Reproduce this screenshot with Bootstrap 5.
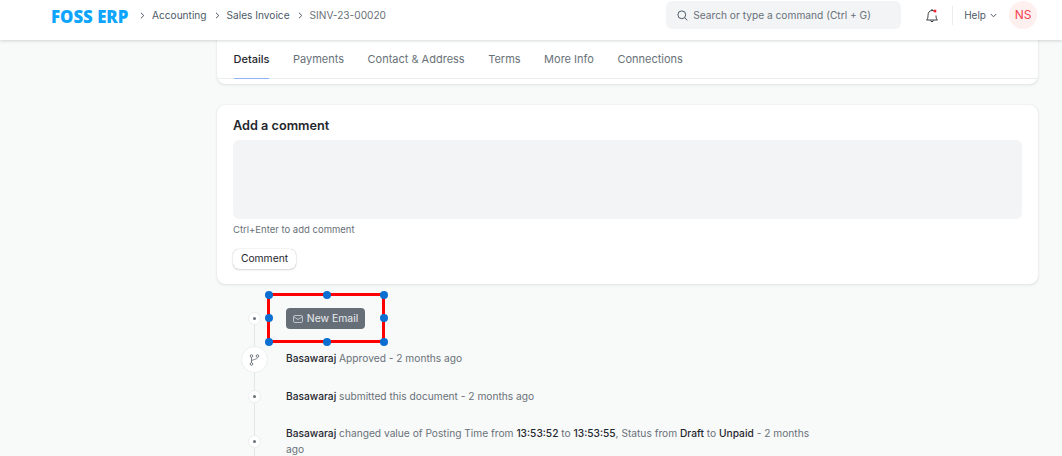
<!DOCTYPE html>
<html lang="en">
<head>
    <meta charset="UTF-8">
    <title>SINV-23-00020</title>
    <link href="https://cdn.jsdelivr.net/npm/bootstrap@5.3.3/dist/css/bootstrap.min.css" rel="stylesheet">
    <style>
        html, body { height: 456px; overflow: hidden; }
        body { background: #f8f9f9; font-family: Inter, "Liberation Sans", sans-serif; color: #1f272e; font-size: 11px; }

        .top-bar { height: 40px; background: #fff; box-shadow: 0 1px 3px rgba(25, 39, 52, .18); padding: 0 25px 10px 51px; position: relative; z-index: 2; }
        .brand-name { font-family: "Open Sans", sans-serif; font-weight: 800; font-size: 16.8px; color: #0ea5ff; width: 81px; margin-top: 3px; white-space: nowrap; }
        .crumb { color: #4c5a67; font-size: 10.15px; white-space: nowrap; margin-top: 1px; }
        .crumb-last { color: #687178; }
        .crumb-sep { width: 5px; height: 7px; margin: 0 7px 0 8px; }
        .search-box { width: 235px; height: 28px; margin-left: auto; background: #f3f4f6; border-radius: 6px; color: #687178; padding-left: 11px; font-size: 10.2px; white-space: nowrap; }
        .search-box svg { margin-right: 5px; }
        .search-box span { margin-top: 1px; }
        .bell-icon { margin-left: 25px; }
        .nav-divider { width: 1px; height: 19px; background: #ebeef0; margin: 0 11px 0 14px; }
        .help-link { color: #4c5a67; font-size: 10px; margin-right: 12px; margin-top: 1px; }
        .user-avatar { width: 28px; height: 28px; border-radius: 50%; background: #fff0f0; color: #f5414f; font-size: 12px; }

        .page-body { padding-left: 217px; padding-right: 24px; }
        .tabs-card { height: 44px; background: #fff; border-radius: 0 0 8px 8px; box-shadow: 0 0 1px rgba(25, 39, 52, .15), 0 1px 3px rgba(25, 39, 52, .1); }
        .tab-row { height: 39px; border-bottom: 1px solid #ebeef0; gap: 23.5px; padding: 0 16.5px; }
        .tab-item { color: #687178; font-size: 11px; height: 39px; line-height: 38px; }
        .tab-active { color: #1f272e; font-weight: 500; border-bottom: 1px solid #8eb4f5; }

        .comment-card { height: 179px; margin-top: 21px; background: #fff; border-radius: 8px; box-shadow: 0 0 1px rgba(25, 39, 52, .15), 0 1px 3px rgba(25, 39, 52, .1); padding: 13px 16px 12px; }
        .comment-title { font-size: 12.7px; font-weight: 600; color: #1f272e; line-height: 16px; margin-bottom: 6px; }
        .comment-box { height: 79px; background: #f3f4f6; border-radius: 6px; }
        .comment-hint { color: #687178; font-size: 9.5px; line-height: 12px; margin: 5px 0 13px; }
        .comment-btn { height: 20px; width: 63px; background: #fff; border-radius: 6px; font-size: 10.3px; color: #1f272e; box-shadow: 0 0 1px rgba(25, 39, 52, .4), 0 1px 2px rgba(25, 39, 52, .15); }

        .time-line { width: 605px; height: 172px; padding-top: 9px; position: relative; }
        .time-line::before { content: ""; position: absolute; left: 37px; top: 34px; bottom: 0; width: 1px; background: #e2e6e9; }
        .tl-row { position: relative; padding-left: 69px; color: #687178; font-size: 10.2px; line-height: 16px; }
        .tl-row b { color: #1f272e; font-weight: 500; }
        .tl-approved { margin-top: 7px; }
        .tl-submitted { margin-top: 22px; }
        .tl-changed { margin-top: 21px; }
        .tl-dot { position: absolute; left: 31px; top: 50%; margin-top: -6.5px; width: 13px; height: 13px; border-radius: 50%; background: #fff; border: 1px solid #ebeef0; z-index: 1; }
        .tl-dot::after { content: ""; position: absolute; left: 4px; top: 4px; width: 3px; height: 3px; border-radius: 50%; background: #687178; }
        .tl-dot-first { top: 34px; }
        .tl-big { position: absolute; left: 24px; top: -4px; width: 27px; height: 27px; border-radius: 50%; background: #fff; border: 1px solid #ebeef0; z-index: 1; }

        .select-frame { width: 118px; height: 50px; margin-left: 50px; padding-left: 16px; border: 3px solid #f00; position: relative; }
        .email-btn { height: 21px; width: 79px; margin-top: 1px; background: #666f78; border-radius: 4px; color: #e8ebee; font-size: 10.4px; gap: 4px; }
        .grip { position: absolute; width: 8px; height: 8px; border-radius: 50%; background: #0a6fd1; }
        .grip-tl { left: -5.5px; top: -5.5px; } .grip-tc { left: 53px; top: -5.5px; } .grip-tr { right: -5.5px; top: -5.5px; }
        .grip-ml { left: -5.5px; top: 18px; } .grip-mr { right: -5.5px; top: 18px; }
        .grip-bl { left: -5.5px; bottom: -5.5px; } .grip-bc { left: 53px; bottom: -5.5px; } .grip-br { right: -5.5px; bottom: -5.5px; }
    </style>
</head>
<body>

    <nav class="top-bar d-flex align-items-center">
        <div class="brand-name">FOSS ERP</div>
        <svg class="crumb-sep" viewBox="0 0 5 7" fill="none" stroke="#4c5a67" stroke-width="1"><path d="M1 .8 3.800 3.500 1 6.200"/></svg>
        <span class="crumb">Accounting</span>
        <svg class="crumb-sep" viewBox="0 0 5 7" fill="none" stroke="#4c5a67" stroke-width="1"><path d="M1 .8 3.800 3.500 1 6.200"/></svg>
        <span class="crumb">Sales Invoice</span>
        <svg class="crumb-sep" viewBox="0 0 5 7" fill="none" stroke="#4c5a67" stroke-width="1"><path d="M1 .8 3.800 3.500 1 6.200"/></svg>
        <span class="crumb crumb-last">SINV-23-00020</span>

        <div class="search-box d-flex align-items-center">
            <svg width="11" height="11" viewBox="0 0 11 11" fill="none" stroke="#4c5a67" stroke-width="1"><circle cx="4.800" cy="4.800" r="3.900"/><path d="M7.700 7.700 10.300 10.300"/></svg>
            <span>Search or type a command (Ctrl + G)</span>
        </div>
        <svg class="bell-icon" width="12" height="15" viewBox="0 0 12 15" fill="none" stroke="#1f272e" stroke-width=".9"><path d="M6 1v1.500M.5 12c1-.8 1.500-2 1.500-4.500C2 4.500 3.600 2.500 6 2.500c.8 0 1.500.2 2 .6M10 7.500c0 2.500.5 3.700 1.500 4.500H.5M4.500 12.500c.2 1.600 2.800 1.600 3 0"/><circle cx="9" cy="3" r="1.500" fill="#f5222d" stroke="none"/></svg>
        <div class="nav-divider"></div>
        <span class="help-link d-flex align-items-center gap-1">Help <svg width="7" height="5" viewBox="0 0 7 5" fill="none" stroke="#4c5a67"><path d="M.8 1 3.500 3.800 6.200 1"/></svg></span>
        <div class="user-avatar d-flex align-items-center justify-content-center">NS</div>
    </nav>

    <main class="page-body">
        <div class="tabs-card">
            <div class="tab-row d-flex">
                <div class="tab-item tab-active">Details</div>
                <div class="tab-item">Payments</div>
                <div class="tab-item">Contact &amp; Address</div>
                <div class="tab-item">Terms</div>
                <div class="tab-item">More Info</div>
                <div class="tab-item">Connections</div>
            </div>
        </div>

        <div class="comment-card">
            <div class="comment-title">Add a comment</div>
            <div class="comment-box"></div>
            <div class="comment-hint">Ctrl+Enter to add comment</div>
            <div class="comment-btn d-flex align-items-center justify-content-center">Comment</div>
        </div>

        <div class="time-line">
            <span class="tl-dot tl-dot-first"></span>
            <div class="select-frame d-flex align-items-center">
                <div class="email-btn d-flex align-items-center justify-content-center">
                    <svg width="10" height="8" viewBox="0 0 10 8" fill="none" stroke="#c9ced3" stroke-width=".9"><rect x=".5" y=".5" width="9" height="7" rx="1.300"/><path d="M.8 1.800 5 4.500 9.200 1.800"/></svg>
                    New Email
                </div>
                <i class="grip grip-tl"></i><i class="grip grip-tc"></i><i class="grip grip-tr"></i>
                <i class="grip grip-ml"></i><i class="grip grip-mr"></i>
                <i class="grip grip-bl"></i><i class="grip grip-bc"></i><i class="grip grip-br"></i>
            </div>
            <div class="tl-row tl-approved">
                <span class="tl-big d-flex align-items-center justify-content-center">
                    <svg width="11" height="12" viewBox="0 0 11 12" fill="none" stroke="#687178" stroke-width=".9"><circle cx="2.500" cy="2" r="1.300"/><circle cx="2.500" cy="10" r="1.300"/><circle cx="8.500" cy="2" r="1.300"/><path d="M2.500 3.300v5.400M8.500 3.300c0 2.500-6 2-6 4"/></svg>
                </span>
                <b>Basawaraj</b> Approved - 2 months ago
            </div>
            <div class="tl-row tl-submitted">
                <span class="tl-dot"></span>
                <b>Basawaraj</b> submitted this document - 2 months ago
            </div>
            <div class="tl-row tl-changed">
                <span class="tl-dot"></span>
                <b>Basawaraj</b> changed value of Posting Time from <b>13:53:52</b> to <b>13:53:55</b>, Status from <b>Draft</b> to <b>Unpaid</b> - 2 months ago
            </div>
        </div>
    </main>

    <script src="https://cdn.jsdelivr.net/npm/bootstrap@5.3.3/dist/js/bootstrap.bundle.min.js"></script>
</body>
</html>
